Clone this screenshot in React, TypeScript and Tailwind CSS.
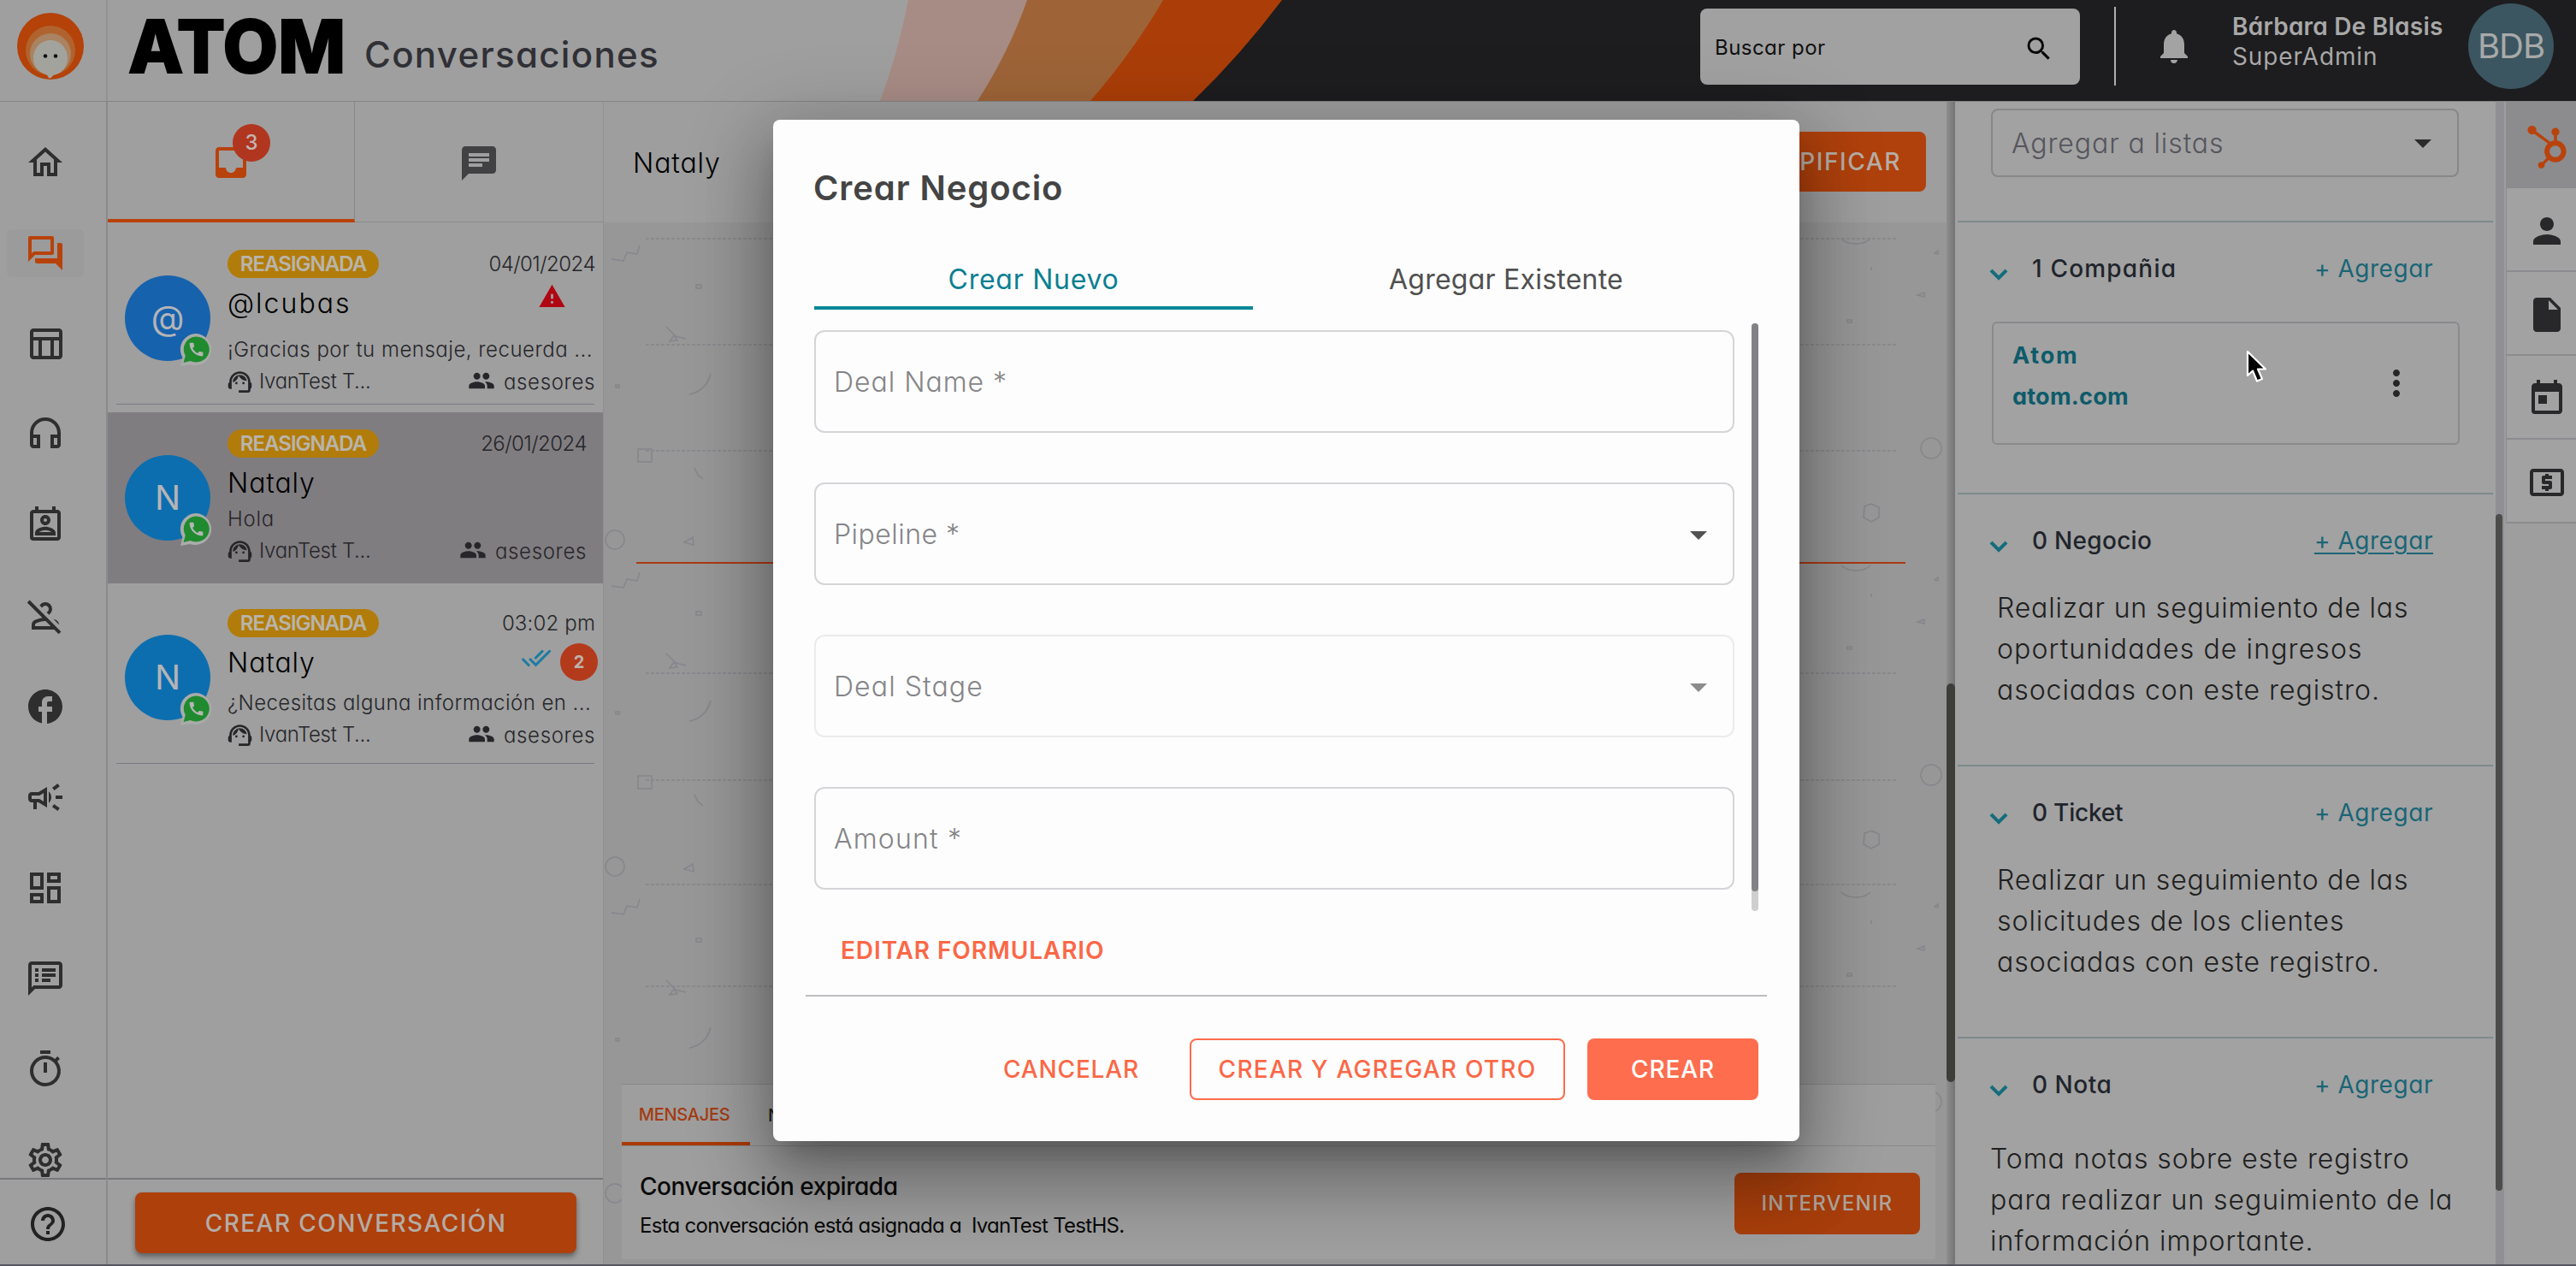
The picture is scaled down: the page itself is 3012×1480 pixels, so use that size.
import React from 'react';
import {
  MdArrowDropDown,
  MdCall,
  MdChat,
  MdDoneAll,
  MdFacebook,
  MdGroup,
  MdHelpOutline,
  MdInbox,
  MdInsertDriveFile,
  MdMoreVert,
  MdNotifications,
  MdOutlineCampaign,
  MdOutlineDashboard,
  MdOutlineForum,
  MdOutlineHeadphones,
  MdOutlineHome,
  MdOutlineLocalAtm,
  MdOutlinePermContactCalendar,
  MdOutlinePersonOff,
  MdOutlineSettings,
  MdOutlineSpeakerNotes,
  MdOutlineTableChart,
  MdOutlineTimer,
  MdPerson,
  MdSearch,
  MdSupportAgent,
  MdToday,
  MdWarning,
} from 'react-icons/md';
import { FaHubspot } from 'react-icons/fa';
import clsx from 'clsx';

const navIcons = [
  MdOutlineHome,
  MdOutlineForum,
  MdOutlineTableChart,
  MdOutlineHeadphones,
  MdOutlinePermContactCalendar,
  MdOutlinePersonOff,
  MdFacebook,
  MdOutlineCampaign,
  MdOutlineDashboard,
  MdOutlineSpeakerNotes,
  MdOutlineTimer,
  MdOutlineSettings,
];

const railIcons = [MdPerson, MdInsertDriveFile, MdToday, MdOutlineLocalAtm];

const Logo: React.FC = () => (
  <svg viewBox="0 0 78 78" className="ml-5 mt-[15px] h-[78px] w-[78px]">
    <circle cx="39" cy="39" r="39" fill="#b44209" />
    <circle cx="39" cy="44" r="29" fill="#b0632f" />
    <circle cx="39" cy="48" r="24" fill="#a98362" />
    <path d="M39 32c11.500 0 20 9.500 20 21.500 0 9-6 17-15.500 19-2.500.6-3 4-5 4-3 0-1.500-3.500-5-4.500C25 69.500 19 62.500 19 53.500 19 41.500 27.500 32 39 32z" fill="#a3a39d" />
    <circle cx="33" cy="50.500" r="2.300" fill="#111" />
    <circle cx="45" cy="50.500" r="2.300" fill="#111" />
  </svg>
);

const Header: React.FC = () => (
  <header className="relative flex h-[118px] shrink-0 items-start bg-[#9f9f9f]">
    <svg viewBox="0 0 3012 118" className="absolute inset-0 h-[118px] w-[3012px]">
      <path d="M1062 0H1220L1160 118H1029Q1050 62 1062 0z" fill="#a78c85" />
      <path d="M1201 0H1380L1290 118H1143Q1180 60 1201 0z" fill="#9e6438" />
      <path d="M1360 0H1510L1410 118H1275Q1325 60 1360 0z" fill="#ab3e08" />
      <path d="M1499 0H3012V118H1395Q1450 65 1499 0z" fill="#1d1c1e" />
    </svg>
    <div className="relative flex h-[118px] w-full items-start">
      <div className="h-[118px] w-[126px] border-r-2 border-[#929292]">
        <Logo />
      </div>
      <svg viewBox="0 0 260 120" className="ml-[21px] h-[120px] w-[260px]">
        <text x="3" y="85" textLength="254" lengthAdjust="spacingAndGlyphs" fontFamily="Inter" fontWeight="800" fontSize="85" stroke="#000" strokeWidth="2">
          ATOM
        </text>
      </svg>
      <h1 className="ml-[19px] mt-10 text-[42px] leading-[48px] font-medium tracking-[1.330px] text-[#303036]">Conversaciones</h1>
      <div className="mt-[10px] mr-10 ml-auto flex h-[89px] w-[444px] items-center justify-between rounded-lg bg-[#a1a1a1] pr-[30px] pl-[17px]">
        <span className="mt-[2px] text-2xl leading-8 tracking-[0.460px] text-[#101010]">Buscar por</span>
        <MdSearch className="mt-1 h-9 w-9 text-[#080808]" />
      </div>
      <div className="mt-2 h-[92px] w-[2px] bg-[#aeaeae]" />
      <MdNotifications className="mt-[30px] ml-11 h-12 w-12 text-[#a3a3a3]" />
      <div className="mt-[14px] ml-[44px] w-[276px] text-[28px] leading-[35px] text-[#a8a8a8]">
        <p className="font-semibold tracking-[0.230px]">Bárbara De Blasis</p>
        <p className="tracking-[0.870px]">SuperAdmin</p>
      </div>
      <div className="mt-1 mr-[26px] flex h-[100px] w-[100px] items-center justify-center rounded-full bg-[#3b5661] text-[40px] tracking-[-1px] text-[#a9a9a9]">BDB</div>
    </div>
  </header>
);

const Sidebar: React.FC = () => (
  <aside className="flex w-[126px] shrink-0 flex-col border-r-2 border-[#8a8a8c] text-[#2e2e2e]">
    <nav className="h-[1258px] overflow-hidden pt-[18px]">
      {navIcons.map((Icon, i) => (
        <div key={i} className="flex h-[106px] items-center pl-2">
          <div className={clsx('flex h-14 w-[90px] items-center justify-center rounded-md', i === 1 && 'bg-[#9b9b9c] text-[#b8420b]')}>
            <Icon className={clsx('h-12 w-12', i === 3 && '-mt-[5px]')} />
          </div>
        </div>
      ))}
    </nav>
    <div className="flex flex-1 items-center border-t-2 border-[#77777c] pl-8">
      <MdHelpOutline className="mt-1 h-12 w-12 text-[#222]" />
    </div>
  </aside>
);

const WhatsappBadge: React.FC = () => (
  <svg viewBox="0 0 40 40" className="absolute -right-[3px] -bottom-[7px] h-10 w-10">
    <path d="M20 1a19 18.500 0 1 1-7 36L2 39l2.500-10A18.500 18.500 0 0 1 20 1z" fill="#a9aca9" />
    <path d="M20.500 4.500a15.500 15 0 1 1-7 28.500L5.500 35l2.300-8A15 15 0 0 1 20.500 4.500z" fill="#1f8b2e" />
    <MdCall x="10" y="9" size={21} color="#b4b6b4" />
  </svg>
);

interface ConversationProps {
  initial: string;
  name: string;
  nameClass: string;
  date: string;
  dateClass: string;
  message: string;
  messageClass: string;
  footerClass: string;
  avatarClass: string;
  active?: boolean;
  children?: React.ReactNode;
}

const Conversation: React.FC<ConversationProps> = ({
  initial, name, nameClass, date, dateClass, message, messageClass, footerClass, avatarClass, active, children,
}) => (
  <div className="mb-[10px]">
    <div className={clsx('flex h-[200px] pl-5', active ? 'bg-[#807d80] pr-[19px]' : 'pr-[9px]')}>
      <div className={clsx('relative mt-[50px] flex h-[100px] w-[100px] shrink-0 items-center justify-center rounded-full text-[40px] text-[#b4b4b8]', avatarClass)}>
        {initial}
        <WhatsappBadge />
      </div>
      <div className="ml-5 w-full min-w-0 pt-5 text-2xl font-light text-[#26262a]">
        <div className="flex h-[33px] items-center justify-between">
          <span className="flex h-[33px] w-[177px] items-center justify-center rounded-full bg-[#b27c0a] font-semibold tracking-[-0.970px] text-[#b8b4ac]">REASIGNADA</span>
          <span className={dateClass}>{date}</span>
        </div>
        <div className="relative mt-[8px] flex h-11 items-center">
          <span className={clsx('text-[32px] text-black', nameClass)}>{name}</span>
          {children}
        </div>
        <p className={clsx('h-8 leading-8 whitespace-nowrap', messageClass)}>{message}</p>
        <div className={clsx('flex h-8 items-center', footerClass)}>
          <MdSupportAgent className="-ml-[2px] h-[33px] w-[33px]" />
          <span className="ml-[6px] tracking-[-0.310px]">IvanTest T...</span>
          <MdGroup className="mt-[-3px] mr-[10px] ml-auto h-8 w-8" />
          <span className="mt-[2px] tracking-[0.640px]">asesores</span>
        </div>
      </div>
    </div>
    {!active && <div className="mr-[10px] -mb-px ml-[10px] h-px bg-[#7a7a84]" />}
  </div>
);

const ConversationList: React.FC = () => (
  <section className="flex w-[580px] shrink-0 flex-col border-r border-[#909090]">
    <div className="flex h-[141px]">
      <div className="relative flex w-[289px] items-center justify-center border-r border-b-4 border-r-[#888] border-b-[#b8420b] pt-1">
        <MdInbox className="h-12 w-12 text-[#b8420b]" />
        <span className="absolute top-[26px] left-[146px] flex h-11 w-11 items-center justify-center rounded-full bg-[#b13620] text-2xl font-medium text-[#c4b4b0]">3</span>
      </div>
      <div className="flex flex-1 items-center justify-center border-b border-[#8c8c8c] pt-1">
        <MdChat className="h-12 w-12 text-[#414143]" />
      </div>
    </div>
    <div className="h-[1117px] overflow-hidden pt-3">
      <Conversation
        initial="@"
        name="@lcubas"
        nameClass="tracking-[2.030px]"
        date="04/01/2024"
        dateClass="tracking-[-0.530px]"
        message="¡Gracias por tu mensaje, recuerda ..."
        messageClass="mt-[16px] tracking-[0.500px]"
        footerClass="mt-[5px]"
        avatarClass="bg-[#1762ad]"
      >
        <MdWarning className="absolute -top-[3px] right-[34px] h-[33px] w-[33px] text-[#b00612]" />
      </Conversation>
      <Conversation
        initial="N"
        name="Nataly"
        nameClass="tracking-[0.860px]"
        date="26/01/2024"
        dateClass="tracking-[-0.530px]"
        message="Hola"
        messageClass="mt-[4px] tracking-[0.710px]"
        footerClass="mt-[5px]"
        avatarClass="bg-[#0d6eaf]"
        active
      />
      <Conversation
        initial="N"
        name="Nataly"
        nameClass="tracking-[0.860px]"
        date="03:02 pm"
        dateClass="tracking-[0.160px]"
        message="¿Necesitas alguna información en ..."
        messageClass="mt-[9px] tracking-[0.450px]"
        footerClass="mt-[5px]"
        avatarClass="bg-[#0d6eaf]"
      >
        <MdDoneAll className="absolute -top-[2px] right-[51px] h-9 w-9 text-[#1b7ba2]" />
        <span className="absolute -top-px -right-[3px] flex h-11 w-11 items-center justify-center rounded-full bg-[#b43a1c] text-xl font-bold text-[#bdb3ae]">2</span>
      </Conversation>
    </div>
    <div className="flex-1 border-t-2 border-[#77777c] pt-[15px] pl-8">
      <button className="h-[71px] w-[516px] rounded-lg bg-[#ae400c] text-[28px] font-medium tracking-[1.440px] text-[#b4aca6] shadow-[0_4px_6px_rgba(0,0,0,0.4)]">
        CREAR CONVERSACIÓN
      </button>
    </div>
  </section>
);

// Faint doodle wallpaper behind the messages, repeats every 382px
const Wallpaper: React.FC = () => (
  <svg viewBox="706 260 1570 1218" className="absolute inset-0 h-full w-full" fill="none" stroke="#85858c" strokeWidth="1.500">
    {[279, 403, 527, 787, 912, 1034, 1153].map((y) => (
      <path key={y} d={`M755 ${y}H2218`} strokeDasharray="4 2" />
    ))}
    {[0, 382, 764].map((dy) => (
      <g key={dy} transform={`translate(0 ${dy})`}>
        <path d="M715 303l14 2 4-10 12 2 3-10M814 333h6v4h-6zM779 382l11 11 12 3M783 399l5-7 4 6zM806 461c14-3 22-12 25-24M720 450h4v3h-4z" />
        <path d="M746 525h16v15h-16zM812 547l4 8 6 5M800 634l10-6 1 9z" />
        <circle cx="719" cy="631" r="11" />
        <path d="M2153 279c8 8 26 8 34 0M2160 374h5v3h-5zM2188 312v4M2242 345l8-3v5zM2262 296l4-3v4z" />
        <path d="M2180 592l8-3 9 4v12l-9 5-9-5z" />
        <circle cx="2258" cy="524" r="12" />
      </g>
    ))}
  </svg>
);

const Chat: React.FC = () => (
  <main className="flex w-[1570px] shrink-0 flex-col bg-[#979797]">
    <div className="flex h-[141px] items-center justify-between bg-[#9e9e9e] pr-6 pl-[34px]">
      <span className="mt-[2px] text-[32px] font-light tracking-[0.860px] text-black">Nataly</span>
      <button className="mt-[-2px] h-[70px] rounded-lg bg-[#b0410c] px-[29px] text-[28px] font-medium tracking-[1.580px] text-[#b7aea6]">TIPIFICAR</button>
    </div>
    <div className="relative flex-1">
      <Wallpaper />
      <div className="relative mt-[397px] ml-[38px] h-[2px] w-[1484px] bg-[#ab3a14]" />
      <div className="relative mt-[608px] ml-[21px] h-[205px] w-[1536px] border-t border-[#88888c] bg-[#9e9e9e]">
        <div className="flex h-[72px] border-b border-[#8a8a8a] text-xl font-medium tracking-[-0.290px]">
          <span className="flex w-[150px] items-center justify-center border-b-4 border-[#a93a08] pt-[2px] pr-1 text-[#a43b12]">MENSAJES</span>
          <span className="flex items-center pl-[21px] text-[#222]">NOTAS</span>
        </div>
        <div className="flex justify-between pr-[18px] pl-[21px]">
          <div className="pt-[27px] whitespace-pre text-[#0a0a0a]">
            <p className="text-[28px] leading-[40px] font-medium tracking-[-0.480px]">Conversación expirada</p>
            <p className="mt-[8px] text-2xl leading-9 tracking-[-0.720px]">{'Esta conversación está asignada a  IvanTest TestHS.'}</p>
          </div>
          <button className="mt-[31px] h-[72px] w-[217px] rounded-lg bg-[#a73e0b] text-2xl font-medium tracking-[1.210px] text-[#ada49c]">INTERVENIR</button>
        </div>
      </div>
    </div>
  </main>
);

interface CrmSectionProps {
  title: string;
  titleClass: string;
  underline?: boolean;
  children: React.ReactNode;
}

const CrmSection: React.FC<CrmSectionProps> = ({ title, titleClass, underline, children }) => (
  <div className="mx-[3px] h-[318px] border-t-2 border-[#7d898c] pt-[34px]">
    <div className="flex h-10 items-center pr-[70px] pl-[37px] text-[28px]">
      <svg viewBox="0 0 22 14" className="mt-[14px] h-[14px] w-[22px]" fill="none" stroke="#156d7b" strokeWidth="4">
        <path d="M2 2l9 9 9-9" />
      </svg>
      <span className={clsx('ml-[28px] font-medium text-[#20242b]', titleClass)}>{title}</span>
      <span className={clsx('ml-auto tracking-[0.550px] text-[#1b6575]', underline && 'underline decoration-2 underline-offset-4')}>+ Agregar</span>
    </div>
    {children}
  </div>
);

const CrmPanel: React.FC = () => (
  <section className="w-[632px] shrink-0 overflow-hidden bg-[#a2a2a2] pt-2">
    <div className="ml-[42px] flex h-[80px] w-[547px] items-center justify-between rounded-lg border-2 border-[#878787] pr-[16px] pl-[22px]">
      <span className="mt-[2px] text-[32px] font-light tracking-[0.900px] text-[#55555c]">Agregar a listas</span>
      <MdArrowDropDown className="h-12 w-12 text-[#2b2b2b]" />
    </div>
    <div className="mt-[51px]">
      <CrmSection title="1 Compañia" titleClass="tracking-[1.190px]">
        <div className="mt-[42px] ml-10 flex h-[144px] w-[547px] items-center justify-between rounded-md border-2 border-[#8a8a8e] pr-[48px] pl-[22px]">
          <div className="mb-[16px] text-[27px] leading-[48px] font-bold text-[#0e5b6a]">
            <p className="tracking-[1.800px]">Atom</p>
            <p className="tracking-[0.240px]">atom.com</p>
          </div>
          <MdMoreVert className="h-12 w-12 text-[#262626]" />
        </div>
      </CrmSection>
      <CrmSection title="0 Negocio" titleClass="tracking-[0.290px]" underline>
        <p className="mt-[35px] pl-[46px] text-[32px] leading-[48px] font-light text-[#202020]">
          <span className="tracking-[0.820px]">Realizar un seguimiento de las</span><br />
          <span className="tracking-[1.120px]">oportunidades de ingresos</span><br />
          <span className="tracking-[0.950px]">asociadas con este registro.</span>
        </p>
      </CrmSection>
      <CrmSection title="0 Ticket" titleClass="tracking-[-0.220px]">
        <p className="mt-[35px] pl-[46px] text-[32px] leading-[48px] font-light text-[#202020]">
          <span className="tracking-[0.820px]">Realizar un seguimiento de las</span><br />
          <span className="tracking-[0.950px]">solicitudes de los clientes</span><br />
          <span className="tracking-[0.950px]">asociadas con este registro.</span>
        </p>
      </CrmSection>
      <CrmSection title="0 Nota" titleClass="tracking-[0.540px]">
        <p className="mt-[43px] pl-[38px] text-[32px] leading-[48px] font-light tracking-[0.950px] text-[#202020]">
          Toma notas sobre este registro<br />
          para realizar un seguimiento de la<br />
          información importante.
        </p>
      </CrmSection>
    </div>
  </section>
);

const Rail: React.FC = () => (
  <aside className="flex-1 bg-[#9e9e9e] pl-[2px] text-[#28282a]">
    <div className="flex h-[101px] items-center justify-center bg-[#8c8c8e] pt-[5px] pl-[14px]">
      <FaHubspot className="h-[50px] w-[50px] text-[#b9430c]" />
    </div>
    {railIcons.map((Icon, i) => (
      <div key={i} className="flex h-[98px] items-center justify-center border-b-2 border-l border-[#8c8c90] bg-[#a2a2a2] pt-1 pl-[13px]">
        <Icon className="h-12 w-12" />
      </div>
    ))}
  </aside>
);

const fieldClass = 'flex h-[120px] items-center justify-between rounded-xl border-2 pt-[2px] pl-[21px] pr-[16px] text-[32px] font-light';

const DealModal: React.FC = () => (
  <div className="absolute top-[140px] left-[904px] flex h-[1194px] w-[1200px] flex-col rounded-lg bg-[#fdfdfd] shadow-[0_22px_30px_-14px_rgba(0,0,0,0.2),0_48px_76px_6px_rgba(0,0,0,0.2),0_18px_92px_16px_rgba(0,0,0,0.2)]">
    <h2 className="mt-[56px] ml-[47px] text-[40px] leading-[48px] font-semibold tracking-[0.900px] text-[#444444]">Crear Negocio</h2>
    <div className="mt-[50px] ml-12 flex w-[1105px] text-[32px]">
      <div className="flex h-[68px] w-[513px] shrink-0 justify-center border-b-4 border-[#0b8799] pt-[9px] leading-[48px] tracking-[0.740px] text-[#0b7f92]">Crear Nuevo</div>
      <div className="flex w-[592px] shrink-0 justify-center pt-[9px] leading-[48px] tracking-[0.230px] text-[#505050]">Agregar Existente</div>
    </div>
    <div className="mt-4 ml-12 flex">
      <div className="flex h-[687px] w-[1076px] flex-col gap-[58px] pt-2 text-[#858588]">
        <div className={clsx(fieldClass, 'border-[#d5d5d9]')}>
          <span className="tracking-[0.970px]">Deal Name *</span>
        </div>
        <div className={clsx(fieldClass, 'border-[#d5d5d9]')}>
          <span className="tracking-[0.480px]">Pipeline *</span>
          <MdArrowDropDown className="h-12 w-12 text-[#525252]" />
        </div>
        <div className={clsx(fieldClass, 'border-[#ebebed]')}>
          <span className="tracking-[1.100px]">Deal Stage</span>
          <MdArrowDropDown className="h-12 w-12 text-[#8c8c8c]" />
        </div>
        <div className={clsx(fieldClass, 'border-[#d5d5d9]')}>
          <span className="tracking-[1.190px]">Amount *</span>
        </div>
      </div>
      <div className="ml-5 h-[687px] w-2 rounded-full bg-[#cfcfd0]">
        <div className="h-[664px] rounded-full bg-[#828286]" />
      </div>
    </div>
    <button className="mt-[26px] ml-[79px] self-start text-[28px] leading-10 font-semibold tracking-[0.900px] text-[#fb6847]">EDITAR FORMULARIO</button>
    <div className="mt-[32px] ml-[38px] h-[2px] w-[1124px] bg-[#bdbdc1]" />
    <div className="mt-[49px] mr-12 flex h-[72px] items-center justify-end text-[28px] font-medium text-[#fb6847]">
      <span className="mr-[59px] tracking-[0.850px]">CANCELAR</span>
      <span className="mr-[26px] flex h-[72px] w-[439px] items-center justify-center rounded-lg border-2 border-[#fd6b4b] tracking-[1.240px]">CREAR Y AGREGAR OTRO</span>
      <span className="flex h-[72px] w-[200px] items-center justify-center rounded-lg bg-[#fd6d4e] tracking-[0.900px] text-white">CREAR</span>
    </div>
  </div>
);

export default function App() {
  return (
    <div className="relative flex h-[1480px] w-[3012px] flex-col overflow-hidden bg-[#9f9f9f] font-[Inter,sans-serif] [font-feature-settings:'cv11']">
      <Header />
      <div className="flex h-[1362px] border-t border-b-2 border-t-[#838383] border-b-[#56565f]">
        <Sidebar />
        <ConversationList />
        <Chat />
        <div className="w-[10px] shrink-0 bg-linear-to-r from-[#8e8e8e] to-[#747474] pt-[680px]">
          <div className="h-[466px] rounded-full bg-[#3d3d39]" />
        </div>
        <CrmPanel />
        <div className="w-[10px] shrink-0 bg-[#909094] pt-[482px]">
          <div className="h-[791px] w-2 rounded-full bg-[#4c4c4b]" />
        </div>
        <Rail />
      </div>
      <DealModal />
      <svg viewBox="0 0 26 40" className="absolute top-[409px] left-[2626px] h-10 w-[26px]">
        <path d="M2 2v28l6-5.500 5 12 6-2.500-5-11.500h9z" fill="#000" stroke="#fff" strokeWidth="2.200" strokeLinejoin="round" />
      </svg>
    </div>
  );
}
